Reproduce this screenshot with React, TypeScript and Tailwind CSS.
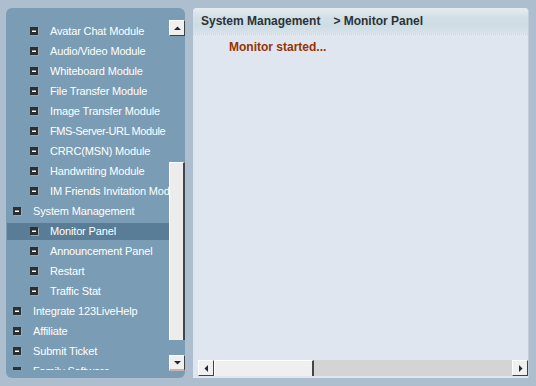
import React from 'react';

type Item = { label: string; level: 1 | 2; active?: boolean; tight?: boolean };

const items: Item[] = [
  { label: 'Avatar Chat Module', level: 2 },
  { label: 'Audio/Video Module', level: 2 },
  { label: 'Whiteboard Module', level: 2 },
  { label: 'File Transfer Module', level: 2 },
  { label: 'Image Transfer Module', level: 2 },
  { label: 'FMS-Server-URL Module', level: 2, tight: true },
  { label: 'CRRC(MSN) Module', level: 2 },
  { label: 'Handwriting Module', level: 2 },
  { label: 'IM Friends Invitation Module', level: 2 },
  { label: 'System Management', level: 1 },
  { label: 'Monitor Panel', level: 2, active: true },
  { label: 'Announcement Panel', level: 2 },
  { label: 'Restart', level: 2 },
  { label: 'Traffic Stat', level: 2 },
  { label: 'Integrate 123LiveHelp', level: 1 },
  { label: 'Affiliate', level: 1 },
  { label: 'Submit Ticket', level: 1 },
  { label: 'Family Software', level: 1 },
];

function MinusBox() {
  return (
    <svg width="9" height="9" viewBox="0 0 9 9" className="shrink-0">
      <rect x="1" y="1" width="8" height="8" fill="#9aa7b0" />
      <rect x="0" y="0" width="8" height="8" fill="#2b3033" />
      <rect x="2" y="3.5" width="4" height="1.5" fill="#ffffff" />
    </svg>
  );
}

function Arrow({ dir }: { dir: 'up' | 'down' | 'left' | 'right' }) {
  const pts = {
    up: '1,6 4.5,2.5 8,6',
    down: '1,3 8,3 4.5,6.5',
    left: '6,1 6,8 2.5,4.5',
    right: '3,1 3,8 6.5,4.5',
  }[dir];
  return (
    <svg width="9" height="9" viewBox="0 0 9 9">
      <polygon points={pts} fill="#1f2a30" />
    </svg>
  );
}

function ScrollButton({ dir, className = '' }: { dir: 'up' | 'down' | 'left' | 'right'; className?: string }) {
  return (
    <div
      className={`w-[16px] h-[16px] flex items-center justify-center bg-[#f0f0f0] border-l border-t border-[#ffffff] border-r border-b border-r-[#3a4448] border-b-[#3a4448] ${className}`}
    >
      <Arrow dir={dir} />
    </div>
  );
}

export default function App() {
  return (
    <div
      className="w-[536px] h-[386px] bg-[#adbfcf] flex gap-[8px] pl-[6px] pr-[7px] pt-[8px] pb-[8px] overflow-hidden text-white"
      style={{ fontFamily: '"Liberation Sans", Arial, sans-serif' }}
    >
      {/* Left tree panel */}
      <div className="w-[179px] shrink-0 rounded-[6px] bg-[#7a9cb4] flex">
        <div className="flex-1 ml-[1px] pt-[15px] mb-[8px] overflow-hidden">
          <div className="flex flex-col gap-[3px]">
            {items.map((it) => (
              <div
                key={it.label}
                className={`h-[17px] shrink-0 flex items-center whitespace-nowrap text-[11px] leading-none ${
                  it.tight ? 'tracking-[-0.4px]' : 'tracking-[-0.15px]'
                } ${it.active ? 'bg-[#5a7d97]' : ''} ${
                  it.level === 1 ? 'pl-[6px] gap-[11px]' : 'pl-[23px] gap-[11px]'
                }`}
              >
                <MinusBox />
                <span>{it.label}</span>
              </div>
            ))}
          </div>
        </div>
        <div className="w-[16px] shrink-0 flex flex-col pt-[12px] pb-[7px]">
          <ScrollButton dir="up" />
          <div className="flex-1 flex flex-col">
            <div className="mt-[126px] h-[178px] bg-[#ececec] border-t border-l border-[#ffffff] border-r-2 border-r-[#3d474c]" />
          </div>
          <ScrollButton dir="down" className="border-b-[#cbb3a8] border-b-2" />
        </div>
      </div>

      {/* Right content panel */}
      <div className="flex-1 rounded-t-[4px] bg-[#dfe6ef] border-r border-[#c3ced8] flex flex-col">
        <div className="h-[27px] shrink-0 rounded-t-[4px] bg-[linear-gradient(#e6ecf2,#d2e0e6_35%,#cedde4_70%,#d8e2ea)] border-b border-dotted border-[#c8d4dc] flex items-center pl-[8px] text-[12px] font-bold text-[#2b3238] whitespace-pre">
          <span>System Management</span>
          <span className="ml-[13px]">&gt; Monitor Panel</span>
        </div>
        <div className="flex-1 flex flex-col">
          <div className="pl-[36px] pt-[5px] text-[12px] font-bold text-[#993300] leading-[14px]">
            Monitor started...
          </div>
          <div className="flex-1" />
          <div className="h-[16px] ml-[5px] mb-[2px] flex bg-[#d4d4d4]">
            <ScrollButton dir="left" className="w-[15px]" />
            <div className="w-[100px] bg-[#efefef] border-t border-l border-[#ffffff] border-r-2 border-r-[#3d474c]" />
            <div className="flex-1" />
            <ScrollButton dir="right" />
          </div>
        </div>
      </div>
    </div>
  );
}
